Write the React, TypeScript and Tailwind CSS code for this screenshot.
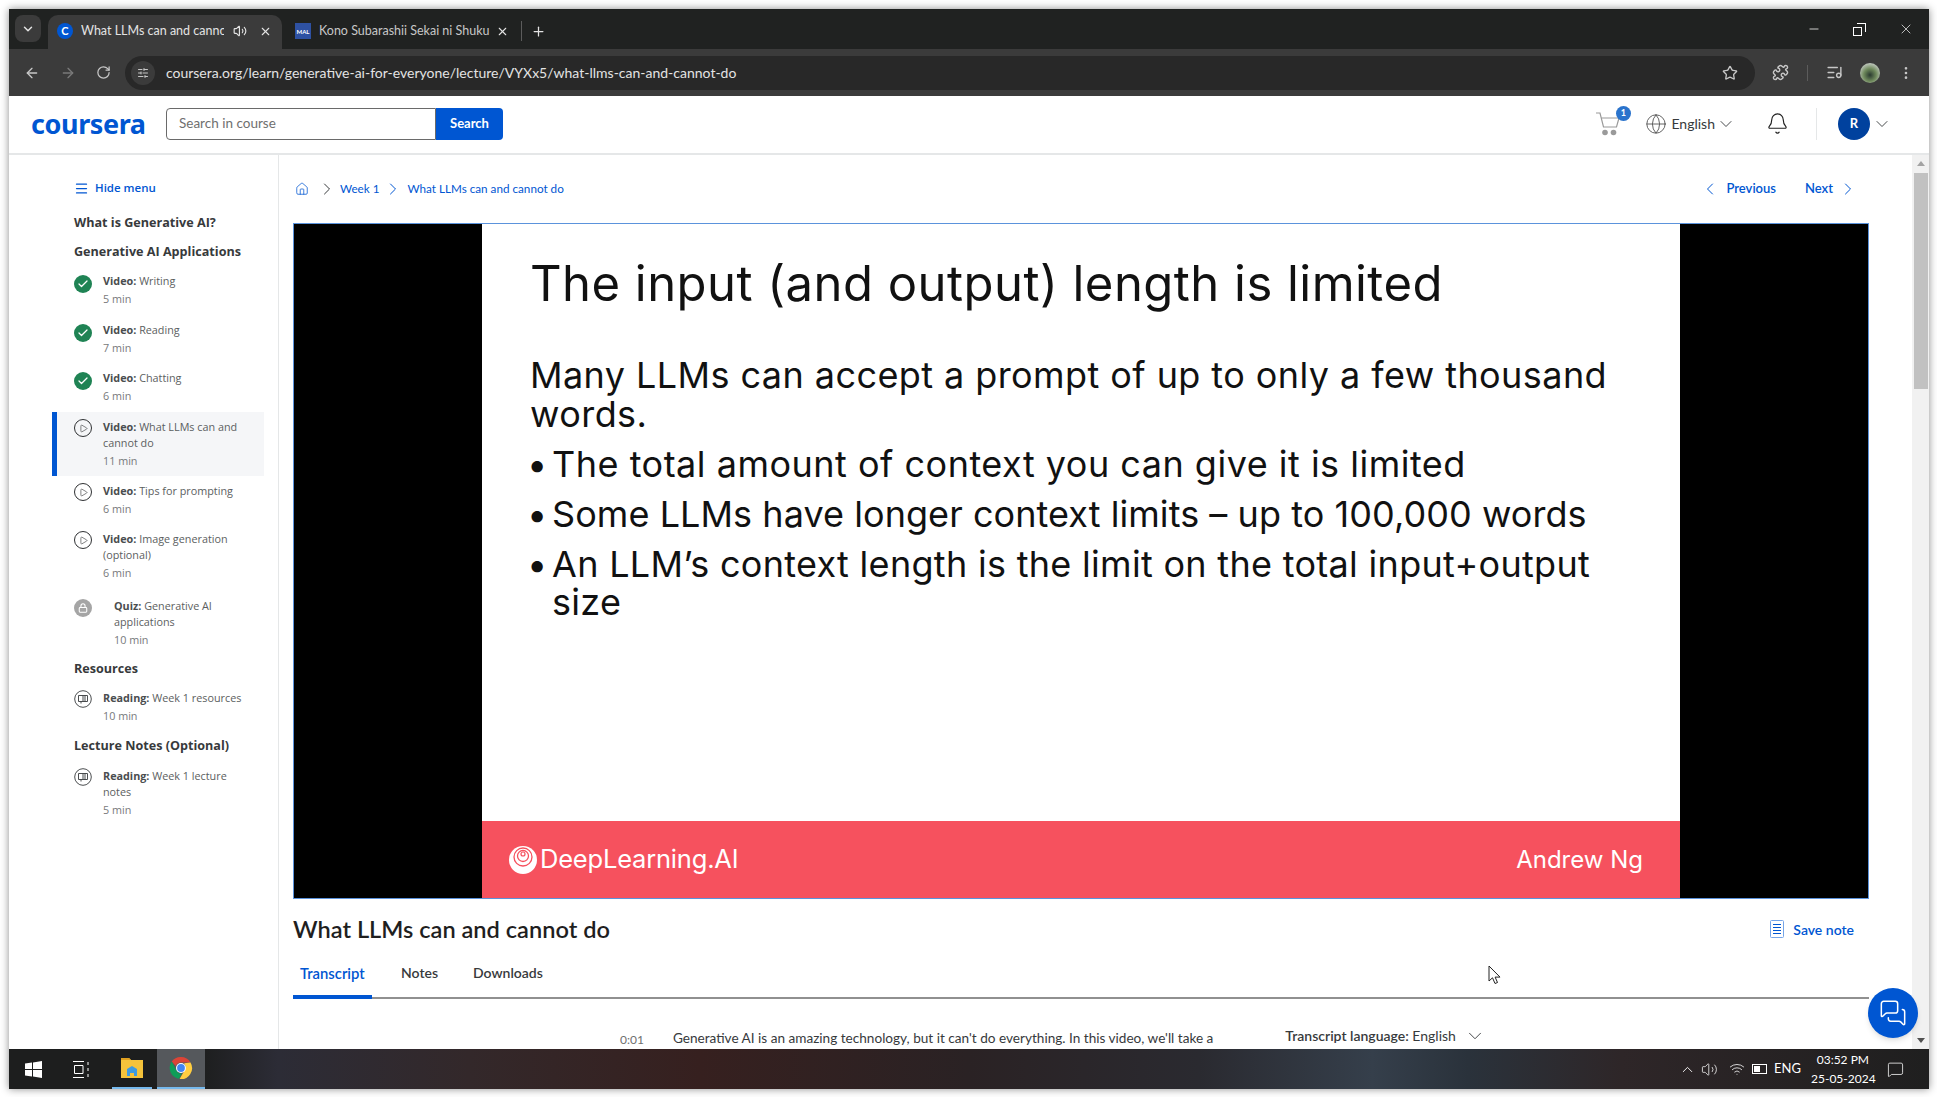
import { ArrowLeft, ArrowRight, ChevronDown, ChevronLeft, ChevronRight, Globe, Home, Lock, Menu, Minus, Plus, Puzzle, RotateCw, Star, Volume2, X, Bell, Check, ChevronUp, ListMusic, MessageSquare, MessagesSquare, Play, EllipsisVertical, SlidersHorizontal, Wifi } from "lucide-react";

type LessonProps = {
  kind: "done" | "play" | "lock" | "read";
  label: string;
  title: string;
  time: string;
  active?: boolean;
  extra?: string;
};

const sans = "font-['Lato','Noto_Sans',sans-serif]";

function BookIcon() {
  return (
    <svg width="18" height="18" viewBox="0 0 18 18" fill="none" stroke="#373a3c" strokeWidth="0.9">
      <circle cx="9" cy="9" r="8.3" />
      <path d="M4.5 5.5H9V11.5H4.5ZM9 5.5H13.5V11.5H9M7 11.5V13.5M11 11.5V5.5" />
    </svg>
  );
}

function CartIcon() {
  return (
    <svg width="26" height="24" viewBox="0 0 26 24" fill="none" stroke="#9a9a9a" strokeWidth="1.2">
      <path d="M0 1h4l3.5 14h13l2.5-9H5.2" />
      <circle cx="9" cy="20.5" r="2.8" fill="#9a9a9a" stroke="none" />
      <circle cx="17.5" cy="20.5" r="2.8" fill="#9a9a9a" stroke="none" />
    </svg>
  );
}

function NoteIcon() {
  return (
    <svg width="14" height="18" viewBox="0 0 14 18" fill="none" className="ml-auto -mt-[2px]">
      <rect x="0.5" y="0.5" width="13" height="17" rx="1" stroke="#76a5e8" />
      <path d="M3 4.5h8M3 7.5h8M3 10.5h8M3 13.5h8" stroke="#0056d2" />
    </svg>
  );
}

function LessonIcon({ kind }: { kind: LessonProps["kind"] }) {
  if (kind === "done") {
    return (
      <div className="mt-[2px] flex h-[18px] w-[18px] items-center justify-center rounded-full bg-[#1f8354]">
        <Check size={12} color="white" strokeWidth={2.5} />
      </div>
    );
  }
  if (kind === "play") {
    return (
      <div className="flex h-[18px] w-[18px] items-center justify-center rounded-full border border-[#2f3133]">
        <Play size={9} color="#2f3133" strokeWidth={1.6} />
      </div>
    );
  }
  if (kind === "lock") {
    return (
      <div className="mt-[1px] flex h-[18px] w-[18px] items-center justify-center rounded-full bg-[#a5a5a5]">
        <Lock size={10} color="white" strokeWidth={2.5} />
      </div>
    );
  }
  return <BookIcon />;
}

function Lesson({ kind, label, title, time, active, extra }: LessonProps) {
  return (
    <div
      className={`flex py-[7px] pr-2 border-l-[5px] pl-[17px] ${active ? "border-[#0056d2] bg-[#f5f6f8]" : "border-transparent"} ${extra ?? ""}`}
    >
      <div className="w-[29px] shrink-0">
        <LessonIcon kind={kind} />
      </div>
      <div className={`font-['Open_Sans',sans-serif] text-[10.8px] leading-4 text-[#5b5e60] ${kind === "lock" ? "pl-[11px]" : ""}`}>
        <div>
          <span className="font-bold text-[#4a4d4f]">{label}:</span> {title}
        </div>
        <div className="mt-[2px] text-[#77797b]">{time}</div>
      </div>
    </div>
  );
}

function SectionTitle({ children, height }: { children: string; height: string }) {
  return (
    <div className={`${height} flex items-center pl-[22px] font-['Open_Sans',sans-serif] text-[12.6px] font-bold text-[#373a3c]`}>
      {children}
    </div>
  );
}

function Sidebar() {
  return (
    <aside className="w-[270px] shrink-0 border-r border-[#e5e7e8] pt-[25px] pl-[43px]">
      <div className="mb-[13px] flex h-4 items-center gap-[6px] pl-[22px] font-['Open_Sans',sans-serif] text-[11.5px] font-semibold text-[#0056d2]">
        <Menu size={15} strokeWidth={2} />
        Hide menu
      </div>
      <div className="w-[212px]">
        <SectionTitle height="h-[29px]">What is Generative AI?</SectionTitle>
        <SectionTitle height="h-[28px]">Generative AI Applications</SectionTitle>
        <Lesson kind="done" label="Video" title="Writing" time="5 min" extra="mb-[1px]" />
        <Lesson kind="done" label="Video" title="Reading" time="7 min" />
        <Lesson kind="done" label="Video" title="Chatting" time="6 min" extra="mb-[1px]" />
        <Lesson kind="play" label="Video" title="What LLMs can and cannot do" time="11 min" active />
        <Lesson kind="play" label="Video" title="Tips for prompting" time="6 min" />
        <Lesson kind="play" label="Video" title="Image generation (optional)" time="6 min" extra="mb-[3px]" />
        <Lesson kind="lock" label="Quiz" title="Generative AI applications" time="10 min" />
        <SectionTitle height="h-[28px]">Resources</SectionTitle>
        <Lesson kind="read" label="Reading" title="Week 1 resources" time="10 min" />
        <SectionTitle height="h-[30px]">Lecture Notes (Optional)</SectionTitle>
        <Lesson kind="read" label="Reading" title="Week 1 lecture notes" time="5 min" />
      </div>
    </aside>
  );
}

function BrowserChrome() {
  return (
    <div className="font-['Lato',sans-serif]">
      {/* tab strip */}
      <div className="flex h-[40px] items-end bg-[#202221] pl-[6px] text-[12.5px] text-[#e3e3e3]">
        <div className="mb-[7px] mr-[7px] flex h-[27px] w-[26px] items-center justify-center rounded-lg bg-[#3b3b3b]">
          <ChevronDown size={14} strokeWidth={2.5} />
        </div>
        <div className="flex h-[34px] w-[234px] items-center rounded-t-[10px] bg-[#3b3b3b] pb-[2px] pl-[9px]">
          <div className="flex h-4 w-4 items-center justify-center rounded-full bg-[#0056d2] text-[11px] font-bold text-white">C</div>
          <span className="ml-2 w-[143px] overflow-hidden whitespace-nowrap">What LLMs can and cannot</span>
          <Volume2 size={14} className="ml-[9px]" />
          <X size={13} className="ml-[12px]" />
        </div>
        <div className="flex h-[34px] items-center pb-[2px] pl-[13px]">
          <div className="flex h-4 w-4 items-center justify-center bg-[#2e51a2] text-[6px] font-bold text-white">MAL</div>
          <span className="ml-2 w-[171px] overflow-hidden whitespace-nowrap text-[#c7c7c7]">Kono Subarashii Sekai ni Shuku</span>
          <X size={13} className="ml-[6px]" />
          <div className="ml-[12px] h-[20px] w-px bg-[#5c5c5c]" />
          <Plus size={15} className="ml-[9px]" />
        </div>
        <div className="flex h-full flex-1 items-center justify-end pr-[15px]">
          <Minus size={14} strokeWidth={1.5} />
          <div className="relative ml-[32px] h-[14px] w-[14px]">
            <div className="absolute bottom-0 left-0 h-[9px] w-[9px] border border-white bg-[#202221]" />
            <div className="absolute right-[1px] top-[1px] h-[9px] w-[9px] border-r border-t border-white" />
          </div>
          <X size={16} strokeWidth={1.2} className="ml-[31px]" />
        </div>
      </div>
      {/* address bar */}
      <div className="flex h-[47px] items-center bg-[#3b3b3b] pl-[15px] pr-[15px] text-[#c7c7c7]">
        <ArrowLeft size={16} />
        <ArrowRight size={16} className="ml-[20px] text-[#7a7a7a]" />
        <RotateCw size={15} className="ml-[20px]" />
        <div className="ml-[14px] flex h-[34px] w-[1632px] items-center rounded-full bg-[#282828] pl-[6px] pr-[17px]">
          <div className="flex h-[24px] w-[24px] items-center justify-center rounded-full bg-[#3b3b3b]">
            <SlidersHorizontal size={12} />
          </div>
          <span className="ml-[11px] flex-1 text-[14px] text-[#e3e3e3]">coursera.org/learn/generative-ai-for-everyone/lecture/VYXx5/what-llms-can-and-cannot-do</span>
          <Star size={16} />
        </div>
        <Puzzle size={17} className="ml-[17px]" />
        <div className="ml-[18px] h-[16px] w-px bg-[#5c5c5c]" />
        <ListMusic size={17} className="ml-[18px]" />
        <div className="ml-[17px] h-[20px] w-[20px] rounded-full bg-[radial-gradient(circle_at_50%_60%,#2a3a30_0%,#6f8a5c_40%,#c9cfc9_80%)]" />
        <EllipsisVertical size={16} className="ml-[18px]" />
      </div>
    </div>
  );
}

function SiteHeader() {
  return (
    <header className={`flex h-[59px] shrink-0 items-center border-b-2 border-[#e5e7e8] pb-[2px] pl-[22px] pr-[37px] ${sans}`}>
      <span className="w-[113px] whitespace-nowrap font-['Noto_Sans',sans-serif] text-[27px] font-bold leading-none tracking-[-0.4px] text-[#0056d2]">coursera</span>
      <div className="ml-[22px] flex h-[32px] w-[337px]">
        <div className="flex flex-1 items-center rounded-l border border-[#6a6a6a] pl-[12px] text-[13.5px] text-[#6f6f6f]">Search in course</div>
        <div className="flex w-[67px] items-center justify-center rounded-r bg-[#0056d2] text-[13px] font-bold text-white">Search</div>
      </div>
      <div className="relative ml-auto">
        <CartIcon />
        <div className="absolute -right-[9px] -top-[6px] flex h-[15px] w-[15px] items-center justify-center rounded-full bg-[#2a73cc] text-[9px] font-bold text-white">1</div>
      </div>
      <Globe size={22} strokeWidth={1} color="#555" className="ml-[23.5px]" />
      <span className="ml-[4px] text-[14px] text-[#373a3c]">English</span>
      <ChevronDown size={20} strokeWidth={1.1} color="#373a3c" className="ml-[1px]" />
      <Bell size={23} strokeWidth={1.2} color="#1f1f1f" className="ml-[30px]" />
      <div className="ml-[27px] h-[32px] w-px bg-[#e5e7e8]" />
      <div className="ml-[21px] flex h-[32px] w-[32px] items-center justify-center rounded-full bg-[#00419e] text-[13px] font-bold text-white">R</div>
      <ChevronDown size={20} strokeWidth={1.1} color="#373a3c" className="ml-[2px]" />
    </header>
  );
}

function Slide() {
  return (
    <div className="flex h-[676px] bg-black border border-[#5b93dc]">
      <div className="ml-[188px] flex w-[1198px] flex-col bg-white font-['Inter',sans-serif] text-[#111]">
        <div className="flex-1 pl-[48px] pt-[31px]">
          <div className="text-[49px] leading-[58px] tracking-[0.47px]">The input (and output) length is limited</div>
          <div className="mt-[43px] text-[36px] leading-[38.5px] tracking-[0.43px]">
            Many LLMs can accept a prompt of up to only a few thousand<br />words.
          </div>
          <div className="mt-[11.5px] flex text-[36px] leading-[38.5px] tracking-[0.5px]"><span className="-ml-[3px] w-[25px]">•</span><span>The total amount of context you can give it is limited</span></div>
          <div className="mt-[11.5px] flex text-[36px] leading-[38.5px] tracking-[0.06px]"><span className="-ml-[3px] w-[25px]">•</span><span>Some LLMs have longer context limits – up to 100,000 words</span></div>
          <div className="mt-[11.5px] flex text-[36px] leading-[38.5px] tracking-[0.3px]"><span className="-ml-[3px] w-[25px]">•</span><span>An LLM’s context length is the limit on the total input+output<br />size</span></div>
        </div>
        <div className="flex h-[77px] items-center justify-between bg-[#f6515e] pl-[26px] pr-[37px] text-white">
          <div className="flex items-center gap-[2px] text-[25.5px] tracking-[-0.2px]">
            <svg width="30" height="30" viewBox="0 0 30 30">
              <circle cx="15" cy="15" r="14" fill="white" />
              <circle cx="15" cy="12" r="9" fill="none" stroke="#f6515e" strokeWidth="1.3" />
              <circle cx="15" cy="11" r="5.5" fill="none" stroke="#f6515e" strokeWidth="1.3" />
              <circle cx="15" cy="9" r="2" fill="none" stroke="#f6515e" strokeWidth="1.2" />
            </svg>
            DeepLearning.AI
          </div>
          <span className="text-[24px]">Andrew Ng</span>
        </div>
      </div>
    </div>
  );
}

function MainContent() {
  return (
    <main className={`min-w-0 flex-1 overflow-hidden pl-[14px] pr-[43px] pt-[25px] ${sans}`}>
      <div className="flex h-[17px] items-center text-[11.7px] text-[#0056d2]">
        <Home size={14} strokeWidth={1.3} className="ml-[2px]" />
        <ChevronRight size={20} strokeWidth={1.2} color="#373a3c" className="ml-[8px]" />
        <span className="ml-[3px]">Week 1</span>
        <ChevronRight size={20} strokeWidth={1.2} color="#0056d2" className="ml-[3px]" />
        <span className="ml-[5px]">What LLMs can and cannot do</span>
        <ChevronLeft size={20} strokeWidth={1.2} className="ml-auto" />
        <span className="ml-[6px] text-[13px] font-semibold">Previous</span>
        <span className="ml-[29px] text-[13px] font-semibold">Next</span>
        <ChevronRight size={20} strokeWidth={1.2} className="ml-[5px] mr-[11px]" />
      </div>
      <div className="mt-[26px]">
        <Slide />
      </div>
      <div className="mt-[14px] flex h-[34px] items-center text-[#1f1f1f]">
        <h1 className="text-[23.6px] font-semibold">What LLMs can and cannot do</h1>
        <NoteIcon />
        <span className="-mt-[2px] ml-[9px] mr-[15px] text-[14px] font-semibold text-[#0056d2]">Save note</span>
      </div>
      <div className="mt-[15px] flex h-[37px] border-b-2 border-[#909090] text-[14px] font-semibold text-[#373a3c]">
        <div className="-mb-[2px] w-[79px] border-b-4 border-[#0056d2] pl-[7px] text-[14.8px] text-[#0056d2]">Transcript</div>
        <div className="ml-[29px]">Notes</div>
        <div className="ml-[35px]">Downloads</div>
      </div>
      <div className="mt-[26px] flex whitespace-nowrap text-[13.6px] text-[#373a3c]">
        <span className="ml-[327px] mt-[6px] text-[12px] text-[#6f6f6f]">0:01</span>
        <span className="ml-[29px] mt-[3px]">Generative AI is an amazing technology, but it can't do everything. In this video, we'll take a</span>
        <span className="ml-[72px] flex items-start text-[14px]">
          <span className="font-semibold">Transcript language:</span>&nbsp;English
          <ChevronDown size={22} strokeWidth={1} className="ml-[8px]" />
        </span>
      </div>
    </main>
  );
}

function Scrollbar() {
  return (
    <div className="flex w-[17px] shrink-0 flex-col items-center bg-[#f1f1f1] pt-[6px]">
      <div className="h-0 w-0 border-x-[4px] border-b-[5px] border-x-transparent border-b-[#a3a3a3]" />
      <div className="mt-[7px] h-[216px] w-[14px] bg-[#c1c1c1]" />
      <div className="mt-auto mb-[6px] h-0 w-0 border-x-[4px] border-t-[5px] border-x-transparent border-t-[#505050]" />
    </div>
  );
}

function Taskbar() {
  return (
    <div className="flex h-[40px] shrink-0 items-center bg-[linear-gradient(90deg,#1d1e1e_0%,#1d1e1e_10%,#2c2c36_14%,#33282a_24%,#36201f_36%,#2a2224_50%,#2a2a30_62%,#353f4b_71%,#2a323b_76%,#2e2628_84%,#1f1f1f_100%)] font-['Lato',sans-serif] text-white">
      <svg width="17" height="17" viewBox="0 0 17 17" fill="white" className="ml-[16px]">
        <path d="M0 2.6 7 1.6V8H0ZM8 1.4 17 0V8H8ZM0 9H7V15.4L0 14.4ZM8 9H17V17L8 15.6Z" />
      </svg>
      <svg width="17" height="17" viewBox="0 0 17 17" fill="none" stroke="white" className="ml-[31px]">
        <path d="M0 .5H11M0 16.5H11M1.5 4.5H10V12.5H1.5ZM15 1V4M15 7V10M15 13V16" />
      </svg>
      <div className="ml-[22px] flex h-full w-[40px] items-center justify-center border-b-2 border-[#76b9ed]">
        <svg width="22" height="22" viewBox="0 0 22 22">
          <path d="M0 1h8l2 2h12v18H0Z" fill="#f5c33b" />
          <path d="M0 1h8l2 2H0Z" fill="#e0a020" />
          <path d="M6 19v-7l5-3 5 3v7h-3v-3H9v3Z" fill="#3f9be0" />
        </svg>
      </div>
      <div className="ml-[5px] flex h-full w-[48px] items-center justify-center border-b-2 border-[#76b9ed] bg-[#55585c]">
        <svg width="24" height="24" viewBox="0 0 24 24">
          <path d="M12 1a11 11 0 0 1 9.5 5.5H12a5.5 5.5 0 0 0-5.2 3.6L2.7 5.6A11 11 0 0 1 12 1Z" fill="#db4437" />
          <path d="M2.7 5.6 7.4 14.5a5.5 5.5 0 0 0 5.4 3l-2.9 5.3A11 11 0 0 1 2.7 5.6Z" fill="#0f9d58" />
          <path d="M21.5 6.5A11 11 0 0 1 10.6 23l4.7-8.2a5.5 5.5 0 0 0-.3-7.5Z" fill="#ffcd40" />
          <circle cx="12" cy="12" r="5" fill="white" />
          <circle cx="12" cy="12" r="3.9" fill="#4285f4" />
        </svg>
      </div>
      <div className="ml-auto flex items-center">
        <ChevronUp size={17} strokeWidth={1.3} />
        <Volume2 size={17} strokeWidth={1.1} className="ml-[5px]" />
        <Wifi size={16} strokeWidth={1.2} className="ml-[11px]" />
        <div className="ml-[7px] flex h-[10px] w-[15px] items-center border border-white p-[1px]">
          <div className="h-full w-[6px] bg-white" />
        </div>
        <span className="ml-[7px] text-[13px]">ENG</span>
        <div className="ml-[10px] w-[58px] whitespace-nowrap text-right text-[12px] leading-[19px]">
          <div>03:52 PM</div>
          <div>25-05-2024</div>
        </div>
        <MessageSquare size={17} strokeWidth={1.1} className="ml-[18px] mr-[25px]" />
      </div>
    </div>
  );
}

export default function App() {
  return (
    <div className="h-[1097px] w-[1937px] overflow-hidden bg-white pl-[9px] pt-[9px]">
      <div className="relative flex h-[1080px] w-[1920px] flex-col overflow-hidden bg-white shadow-[0_0_8px_rgba(0,0,0,0.45)]">
        <BrowserChrome />
        <SiteHeader />
        <div className="flex min-h-0 flex-1">
          <Sidebar />
          <MainContent />
          <Scrollbar />
        </div>
        <Taskbar />
        {/* chat bubble floats over the page */}
        <div className="absolute left-[1859px] top-[979px] flex h-[50px] w-[50px] items-center justify-center rounded-full bg-[#0056d2] shadow-md">
          <MessagesSquare size={28} strokeWidth={1.3} color="white" />
        </div>
        {/* mouse pointer */}
        <svg width="13" height="20" viewBox="0 0 13 20" className="absolute left-[1479px] top-[956px]">
          <path d="M1 1v15l3.5-3.2L7 18.5l2.5-1-2.4-5.4H12Z" fill="white" stroke="#222" strokeWidth="1" />
        </svg>
      </div>
    </div>
  );
}
